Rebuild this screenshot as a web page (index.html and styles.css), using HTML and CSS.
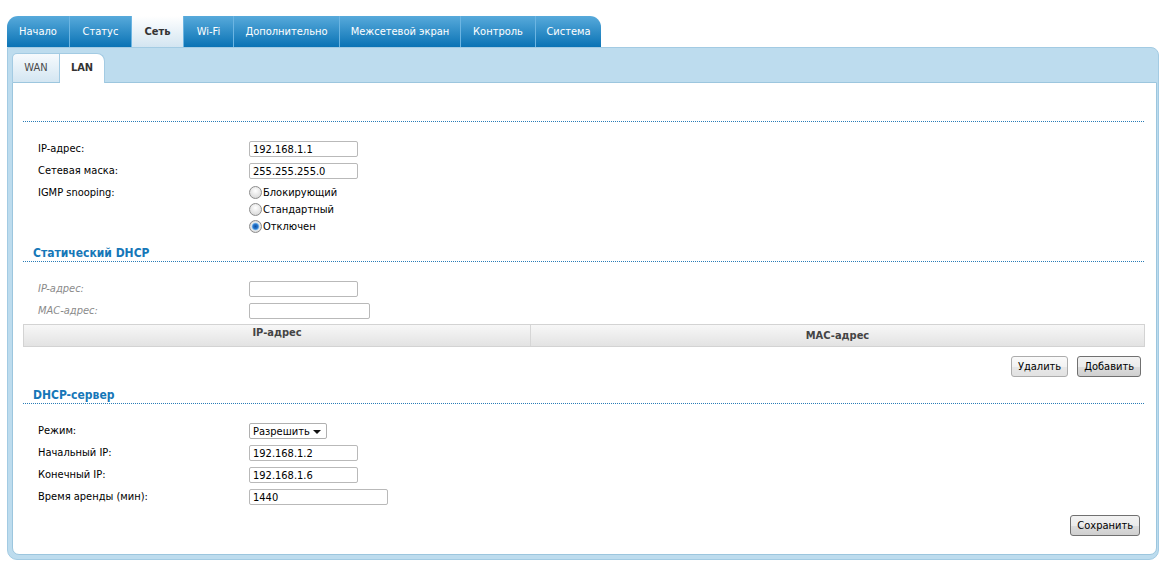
FILE: index.html
```html
<!DOCTYPE html>
<html lang="ru">
<head>
<meta charset="utf-8">
<title>LAN</title>
<link rel="stylesheet" href="styles.css">
</head>
<body>
<div class="page">
  <nav class="tabs">
    <span class="tab">Начало</span>
    <span class="tab">Статус</span>
    <span class="tab active">Сеть</span>
    <span class="tab">Wi-Fi</span>
    <span class="tab">Дополнительно</span>
    <span class="tab">Межсетевой экран</span>
    <span class="tab">Контроль</span>
    <span class="tab">Система</span>
  </nav>
  <div class="frame">
    <div class="subtabs">
      <span class="subtab">WAN</span>
      <span class="subtab active">LAN</span>
    </div>
    <div class="panel">
      <div class="sec-head first"></div>
      <div class="form">
        <div class="row"><label>IP-адрес:</label><input class="inp w108" value="192.168.1.1"></div>
        <div class="row"><label>Сетевая маска:</label><input class="inp w108" value="255.255.255.0"></div>
        <div class="row tall"><label>IGMP snooping:</label>
          <div class="radios">
            <label class="radio"><input type="radio" name="igmp">Блокирующий</label>
            <label class="radio"><input type="radio" name="igmp">Стандартный</label>
            <label class="radio"><input type="radio" name="igmp" checked>Отключен</label>
          </div>
        </div>
      </div>

      <div class="sec-head">Статический DHCP</div>
      <div class="form">
        <div class="row"><label class="muted">IP-адрес:</label><input class="inp w108" value=""></div>
        <div class="row"><label class="muted">MAC-адрес:</label><input class="inp w120" value=""></div>
      </div>
      <div class="grid-head">
        <div class="gh-cell">IP-адрес</div>
        <div class="gh-cell second">MAC-адрес</div>
      </div>
      <div class="actions">
        <button class="btn light">Удалить</button>
        <button class="btn">Добавить</button>
      </div>

      <div class="sec-head">DHCP-сервер</div>
      <div class="form">
        <div class="row"><label>Режим:</label>
          <span class="select-wrap"><select class="sel"><option>Разрешить</option></select></span>
        </div>
        <div class="row"><label>Начальный IP:</label><input class="inp w108" value="192.168.1.2"></div>
        <div class="row"><label>Конечный IP:</label><input class="inp w108" value="192.168.1.6"></div>
        <div class="row"><label>Время аренды (мин):</label><input class="inp w138" value="1440"></div>
      </div>
      <div class="actions save">
        <button class="btn">Сохранить</button>
      </div>
    </div>
  </div>
</div>
</body>
</html>
```
FILE: styles.css
```css
* { box-sizing: border-box; }
body {
  margin: 0;
  background: #fff;
  color: #000;
  font-family: "DejaVu Sans Condensed", "Liberation Sans", sans-serif;
  font-size: 11px;
}
.page { padding: 16px 0 0 7px; width: 1159px; }

/* top tabs */
.tabs {
  display: flex;
  width: max-content;
  height: 31px;
  border-radius: 11px 11px 0 0;
  overflow: hidden;
  background: linear-gradient(#58aadb, #0a73b5);
}
.tab {
  height: 31px;
  line-height: 31px;
  text-align: center;
  color: #fff;
  border-left: 1px solid #6cb5e2;
  white-space: nowrap;
}
.tab:first-child { border-left: none; }
.tab:nth-child(1) { width: 62px; }
.tab:nth-child(2) { width: 62px; }
.tab:nth-child(3) { width: 52px; }
.tab:nth-child(4) { width: 50px; }
.tab:nth-child(5) { width: 106px; }
.tab:nth-child(6) { width: 121px; }
.tab:nth-child(7) { width: 75px; }
.tab:nth-child(8) { width: 66px; }
.tab.active {
  background: linear-gradient(#ffffff, #d3e5f1);
  color: #333;
  font-weight: bold;
}

/* frame */
.frame {
  width: 1152px;
  background: #bddcee;
  border: 1px solid #a3cbe3;
  border-radius: 0 8px 10px 10px;
  padding: 5px 1px 4px 4px;
}
.subtabs { display: flex; height: 29px; }
.subtab {
  width: 48px;
  height: 29px;
  line-height: 28px;
  text-align: center;
  color: #4a4a4a;
  border: 1px solid #a3cbe3;
  border-bottom: none;
  border-radius: 5px 0 0 0;
  background: linear-gradient(#f6fafd, #d4e6f2);
}
.subtab.active {
  width: 45px;
  height: 30px;
  margin-bottom: -1px;
  position: relative;
  z-index: 1;
  border-left: none;
  border-radius: 0 8px 0 0;
  background: #fff;
  color: #333;
  font-weight: bold;
}

.panel {
  background: #fff;
  border: 1px solid #9cc6de;
  border-radius: 0 0 7px 7px;
  padding: 0 11px 18px 10px;
}

.sec-head {
  height: 17px;
  line-height: 16px;
  margin-top: 10px;
  padding-left: 10px;
  color: #1677b8;
  font-weight: bold;
  font-size: 12px;
  background: repeating-linear-gradient(to right, #2a7cb6 0 1px, transparent 1px 2px) left bottom / 100% 1px no-repeat;
}
.sec-head.first { margin-top: 22px; }

.form { padding: 19px 0 0 15px; }
.row {
  display: flex;
  align-items: flex-start;
  height: 16px;
  margin-bottom: 6px;
}
.row:last-child { margin-bottom: 0; }
.row.tall { height: auto; }
.row > label {
  width: 211px;
  flex: none;
  line-height: 15px;
  color: #000;
}
.row > label.muted { color: #8a8a8a; font-style: italic; }

.inp {
  height: 16px;
  padding: 0 3px;
  border: 1px solid #b9b9b9;
  border-radius: 2px;
  font-family: inherit;
  font-size: 11px;
  color: #000;
  background: #fff;
  outline: none;
}
.w108 { width: 109px; }
.w120 { width: 121px; }
.w138 { width: 139px; }

.radios { display: flex; flex-direction: column; margin-top: -1px; }
.radio {
  display: flex;
  align-items: center;
  height: 17px;
  color: #000;
}
.radio input {
  appearance: none;
  -webkit-appearance: none;
  width: 13px;
  height: 13px;
  margin: 0 1px 0 0;
  border-radius: 50%;
  border: 1px solid #8c8c8c;
  background: radial-gradient(circle at 50% 35%, #ffffff, #d0d0d0);
}
.radio input:checked {
  background: radial-gradient(circle at 50% 50%, #0f4f9e 0, #2a7ad0 2.5px, #8cc3ee 3.5px, #e9e9e9 4.2px, #d6d6d6 6px);
}

.select-wrap { position: relative; display: inline-block; }
.sel {
  appearance: none;
  -webkit-appearance: none;
  width: 78px;
  height: 16px;
  padding: 0 3px;
  border: 1px solid #b0b0b0;
  border-radius: 2px;
  background: #fff;
  font-family: inherit;
  font-size: 11px;
  color: #000;
  outline: none;
}
.select-wrap::after {
  content: "";
  position: absolute;
  right: 6px;
  top: 7px;
  border-left: 4px solid transparent;
  border-right: 4px solid transparent;
  border-top: 4px solid #111;
}

.grid-head {
  display: grid;
  grid-template-columns: 506px 1fr;
  height: 23px;
  margin-top: 5px;
  border: 1px solid #d3d3d3;
  background: linear-gradient(#f7f7f7, #e3e3e3);
}
.gh-cell {
  text-align: center;
  font-weight: bold;
  color: #444;
  line-height: 16px;
}
.gh-cell.second {
  border-left: 1px solid #d6d6d6;
  padding-top: 3px;
}

.actions {
  display: flex;
  justify-content: flex-end;
  gap: 9px;
  margin-top: 9px;
  padding-right: 4px;
}
.actions.save { margin-top: 10px; padding-right: 5px; }
.btn {
  height: 21px;
  padding: 0 6px;
  border: 1px solid #707070;
  border-radius: 3px;
  background: linear-gradient(#f2f2f2 0%, #ebebeb 50%, #dddddd 51%, #cfcfcf 100%);
  font-family: inherit;
  font-size: 11px;
  color: #000;
}
.btn.light {
  border-color: #acacac;
  background: linear-gradient(#fafafa 0%, #f2f2f2 50%, #e8e8e8 51%, #e2e2e2 100%);
}
```
